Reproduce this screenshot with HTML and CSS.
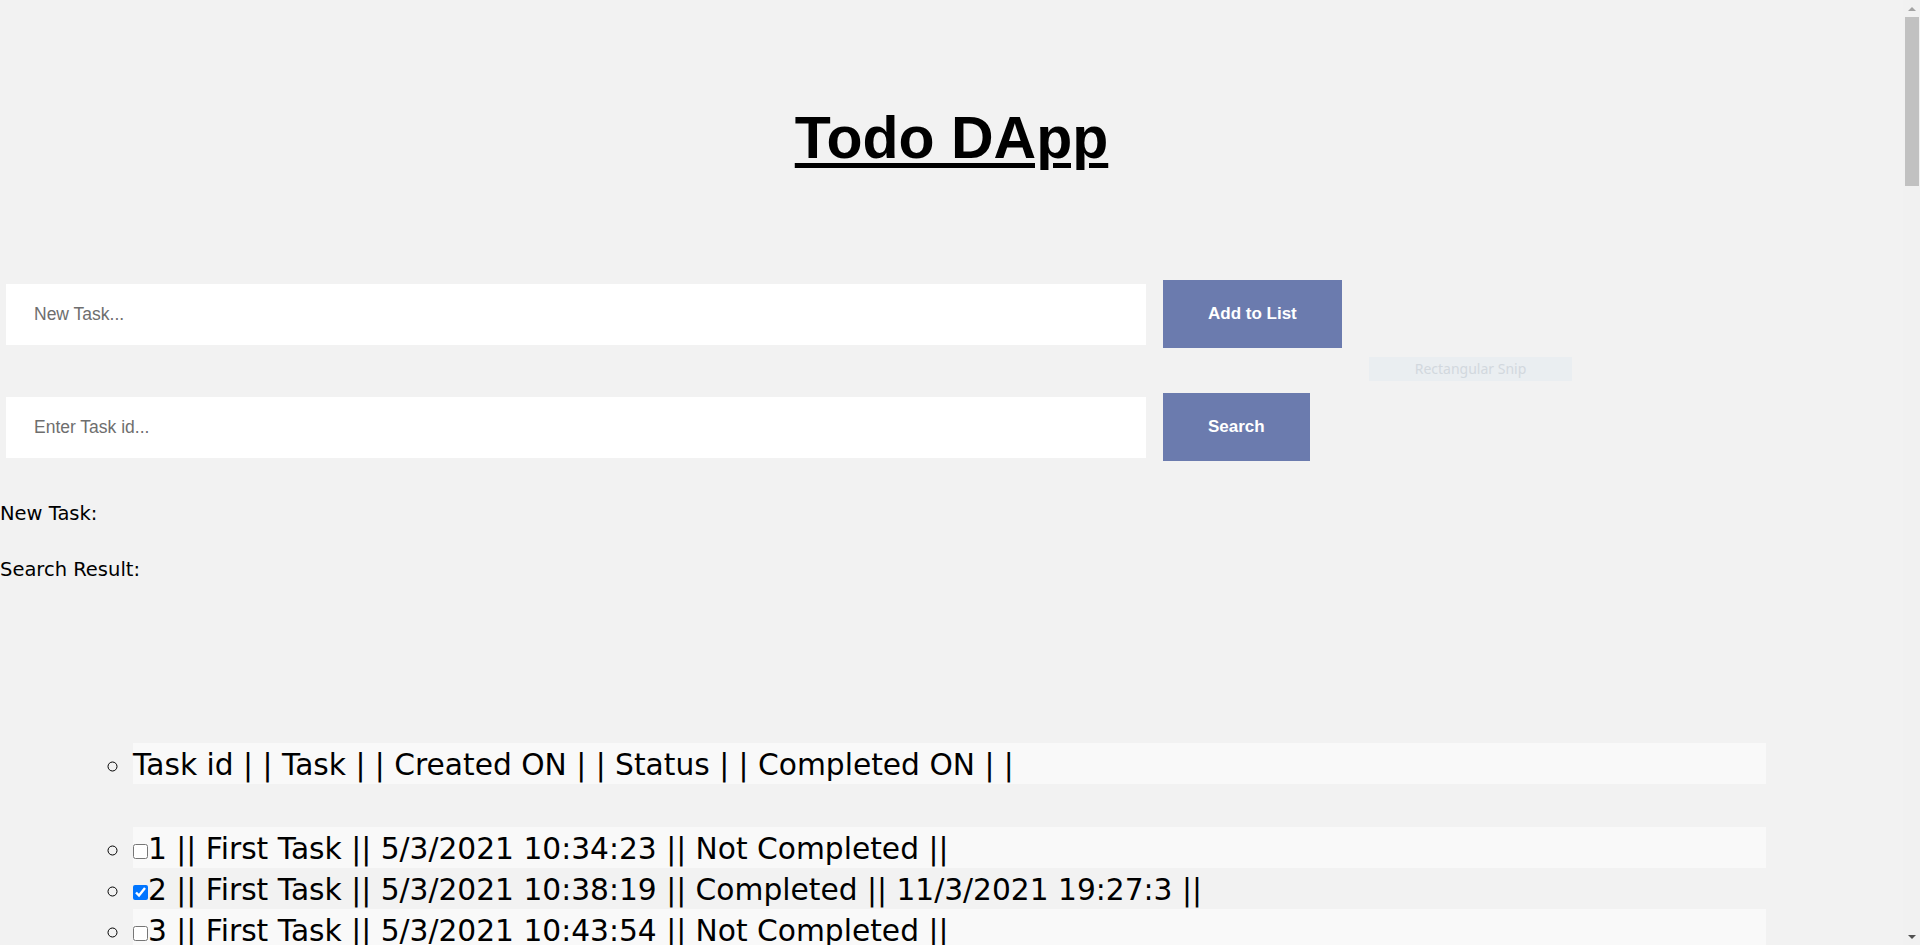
FILE: index.html
```html
<!DOCTYPE html>
<html lang="en">
<head>
<meta charset="utf-8">
<title>Todo DApp</title>
<link rel="stylesheet" href="styles.css">
</head>
<body>
<main class="app">
  <header class="masthead">
    <h1 class="title">Todo DApp</h1>
  </header>

  <section class="forms">
    <form class="form-row">
      <input class="field" type="text" placeholder="New Task...">
      <button class="btn" type="button">Add to List</button>
    </form>
    <form class="form-row">
      <input class="field" type="text" placeholder="Enter Task id...">
      <button class="btn" type="button">Search</button>
    </form>
  </section>

  <section class="status">
    <p class="status-line">New Task:</p>
    <p class="status-line">Search Result:</p>
  </section>

  <section class="tasks">
    <ul class="task-list task-head">
      <li class="task-row">Task id | | Task | | Created ON | | Status | | Completed ON | |</li>
    </ul>
    <ul class="task-list task-body">
      <li class="task-row"><input class="check" type="checkbox">1 || First Task || 5/3/2021 10:34:23 || Not Completed ||</li>
      <li class="task-row"><input class="check" type="checkbox" checked>2 || First Task || 5/3/2021 10:38:19 || Completed || 11/3/2021 19:27:3 ||</li>
      <li class="task-row"><input class="check" type="checkbox">3 || First Task || 5/3/2021 10:43:54 || Not Completed ||</li>
    </ul>
  </section>

  <div class="snip">Rectangular Snip</div>
</main>

<div class="scrollbar" aria-hidden="true">
  <div class="sb-arrow sb-up"></div>
  <div class="sb-track"><div class="sb-thumb"></div></div>
  <div class="sb-arrow sb-down"></div>
</div>
</body>
</html>
```
FILE: styles.css
```css
html, body {
  margin: 0;
  padding: 0;
}

body {
  background: #f2f2f2;
  color: #000;
  font-family: "DejaVu Sans", sans-serif;
}

.app {
  position: relative;
  width: calc(100% - 17px);
  min-height: 5094px;
}

/* fake classic scrollbar, drawn over the right edge */
.scrollbar {
  position: fixed;
  top: 0;
  right: 0;
  bottom: 0;
  width: 17px;
  background: #f1f1f1;
  display: flex;
  flex-direction: column;
}
.sb-arrow {
  height: 17px;
  display: flex;
  align-items: center;
  justify-content: center;
}
.sb-up::before {
  content: "";
  border-left: 4px solid transparent;
  border-right: 4px solid transparent;
  border-bottom: 4px solid #a3a3a3;
}
.sb-down::before {
  content: "";
  border-left: 4px solid transparent;
  border-right: 4px solid transparent;
  border-top: 4px solid #505050;
}
.sb-track {
  flex: 1;
  padding: 0 1px 0 2px;
}
.sb-thumb {
  height: 169px;
  background: #c1c1c1;
}

.masthead {
  padding-top: 104px;
  text-align: center;
}

.title {
  margin: 0;
  font-family: "Liberation Sans", Arial, sans-serif;
  font-weight: bold;
  font-size: 59px;
  line-height: 68px;
  text-decoration: underline;
  text-decoration-thickness: 5px;
  text-underline-offset: 5px;
}

.forms {
  display: flex;
  flex-direction: column;
  gap: 45px;
  margin-top: 108px;
  padding-left: 6px;
}

.form-row {
  display: flex;
  align-items: center;
  gap: 17px;
  margin: 0;
}

.field {
  box-sizing: border-box;
  width: 1140px;
  height: 61px;
  border: none;
  outline: none;
  background: #fff;
  padding: 0 28px;
  font-family: "Liberation Sans", Arial, sans-serif;
  font-size: 17.5px;
  color: #333;
}
.field::placeholder {
  color: #6e6e6e;
}

.btn {
  height: 68px;
  padding: 0 45px;
  border: none;
  background: #6b7bae;
  color: #fff;
  font-family: "Liberation Sans", Arial, sans-serif;
  font-weight: bold;
  font-size: 17px;
  cursor: pointer;
}

.status {
  margin-top: 40px;
}

.status-line {
  margin: 0;
  font-size: 19.5px;
  line-height: 25px;
}
.status-line + .status-line {
  margin-top: 31px;
}

.tasks {
  margin-top: 161px;
}

.task-list {
  margin: 0;
  padding: 0 137px 0 133px;
  list-style: circle;
}
.task-body {
  margin-top: 43px;
}

.task-row {
  font-size: 29.7px;
  line-height: 38px;
  padding-top: 3px;
  white-space: nowrap;
}
.task-head .task-row,
.task-body .task-row:nth-child(odd) {
  background: #f9f9f9;
}

.check {
  width: 15px;
  height: 15px;
  margin: 0;
}

.snip {
  position: absolute;
  left: 1369px;
  top: 357px;
  width: 203px;
  height: 24px;
  background: #eaeef1;
  color: #d2d8de;
  font-family: "Noto Sans", sans-serif;
  font-size: 14px;
  line-height: 24px;
  text-align: center;
}
```
